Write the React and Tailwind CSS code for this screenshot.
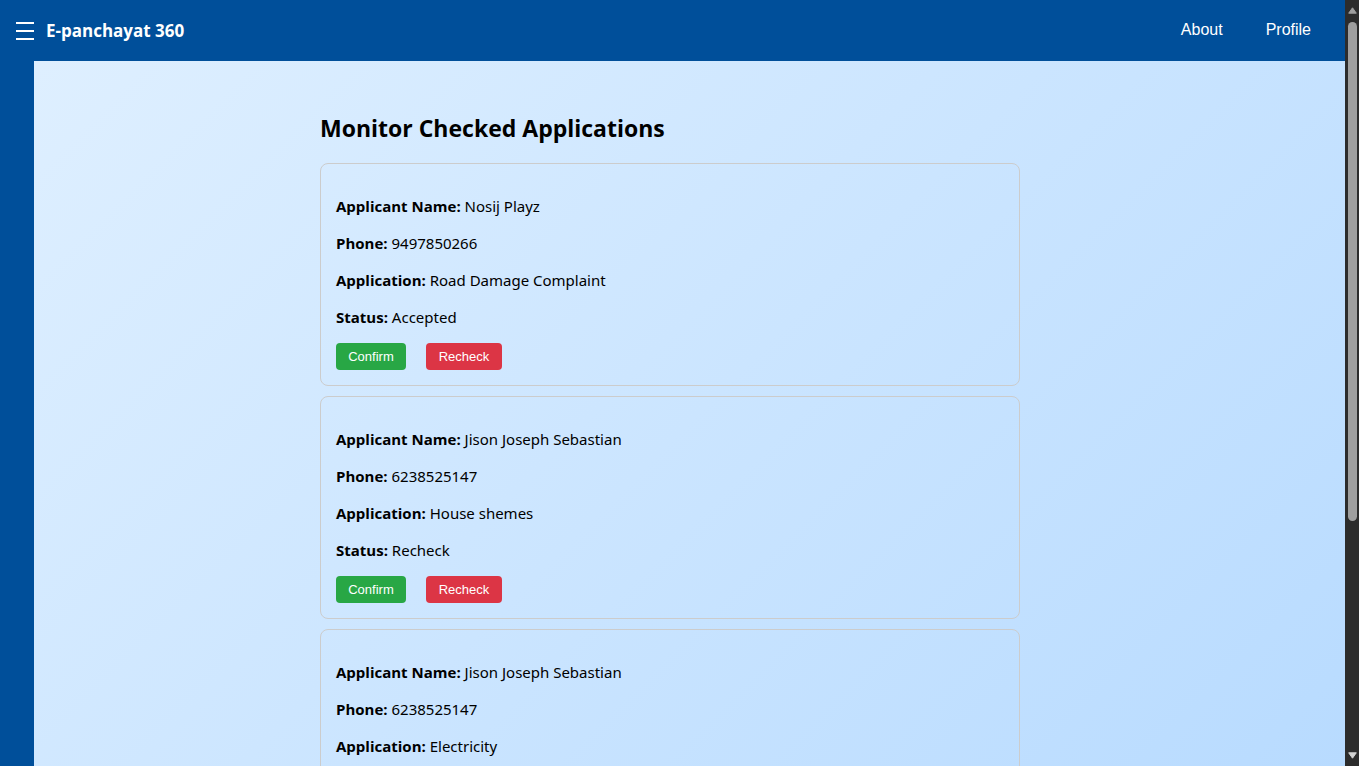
import React from "react";

const applications = [
  { id: 1, name: "Nosij Playz", phone: "9497850266", application: "Road Damage Complaint", status: "Accepted" },
  { id: 2, name: "Jison Joseph Sebastian", phone: "6238525147", application: "House shemes", status: "Recheck" },
  { id: 3, name: "Jison Joseph Sebastian", phone: "6238525147", application: "Electricity", status: "Recheck" },
];

function Field({ label, value }) {
  return (
    <p className="font-['Noto_Sans','Open_Sans',sans-serif]">
      <strong className="font-['Open_Sans','Noto_Sans',sans-serif] font-bold">{label}:</strong> {value}
    </p>
  );
}

function ApplicationCard({ item }) {
  return (
    <li className="rounded-lg border border-[#cccccc] px-[15px] pt-8 pb-[15px]">
      <div className="flex flex-col gap-4 text-[15px] leading-[21px]">
        <Field label="Applicant Name" value={item.name} />
        <Field label="Phone" value={item.phone} />
        <Field label="Application" value={item.application} />
        <Field label="Status" value={item.status} />
      </div>
      <div className="mt-[15px] flex gap-5 font-['Liberation_Sans',Arial,sans-serif] text-[13px] leading-[15px] text-white">
        <button type="button" className="w-[70px] rounded bg-[#28a745] py-1.5">Confirm</button>
        <button type="button" className="w-[76px] rounded bg-[#dc3545] py-1.5">Recheck</button>
      </div>
    </li>
  );
}

function Scrollbar() {
  return (
    <div className="flex w-3.5 shrink-0 flex-col items-center justify-between bg-[#2c2c2c] py-[7px]" aria-hidden="true">
      <div className="flex min-h-0 flex-1 flex-col items-center gap-2">
        <svg width="9" height="7" viewBox="0 0 9 7" className="shrink-0">
          <path d="M4.5 0.8 L8.3 6.2 H0.7 Z" fill="#9f9f9f" stroke="#9f9f9f" strokeLinejoin="round" />
        </svg>
        <div className="h-[67%] w-[9px] rounded-full bg-[#9f9f9f]" />
      </div>
      <svg width="9" height="7" viewBox="0 0 9 7" className="shrink-0">
        <path d="M4.5 6.2 L8.3 0.8 H0.7 Z" fill="#d2d2d2" stroke="#d2d2d2" strokeLinejoin="round" />
      </svg>
    </div>
  );
}

export default function App() {
  return (
    <div className="flex h-screen overflow-hidden font-['Open_Sans','Noto_Sans',sans-serif] text-black">
      <div className="flex min-w-0 flex-1 flex-col bg-linear-135 from-[#e0f0ff] to-[#b8dbff]">
        <header className="flex h-[61px] shrink-0 items-center justify-between bg-[#004f9a] pr-[34px] pl-4 text-white">
          <div className="flex items-center gap-3">
            <button type="button" aria-label="Open menu">
              <svg width="18" height="18" viewBox="0 0 18 18" className="block" stroke="white" strokeWidth="2">
                <path d="M0 1H18M0 9H18M0 17H18" />
              </svg>
            </button>
            <span className="text-[17px] font-bold">E-panchayat 360</span>
          </div>
          <nav className="flex gap-[43px] pb-0.5 font-['Liberation_Sans',Arial,sans-serif] text-base">
            <a href="#about">About</a>
            <a href="#profile">Profile</a>
          </nav>
        </header>
        <div className="flex min-h-0 flex-1">
          <aside className="w-[34px] shrink-0 bg-[#004f9a]" />
          <main className="min-w-0 flex-1 overflow-y-auto pt-[51px] pr-[39px] pb-10 [scrollbar-width:none]">
            <section className="mx-auto max-w-[700px]">
              <h2 className="mb-[19px] text-[23px] leading-8 font-bold">Monitor Checked Applications</h2>
              <ul className="flex flex-col gap-2.5">
                {applications.map((item) => (
                  <ApplicationCard key={item.id} item={item} />
                ))}
              </ul>
            </section>
          </main>
        </div>
      </div>
      <Scrollbar />
    </div>
  );
}
